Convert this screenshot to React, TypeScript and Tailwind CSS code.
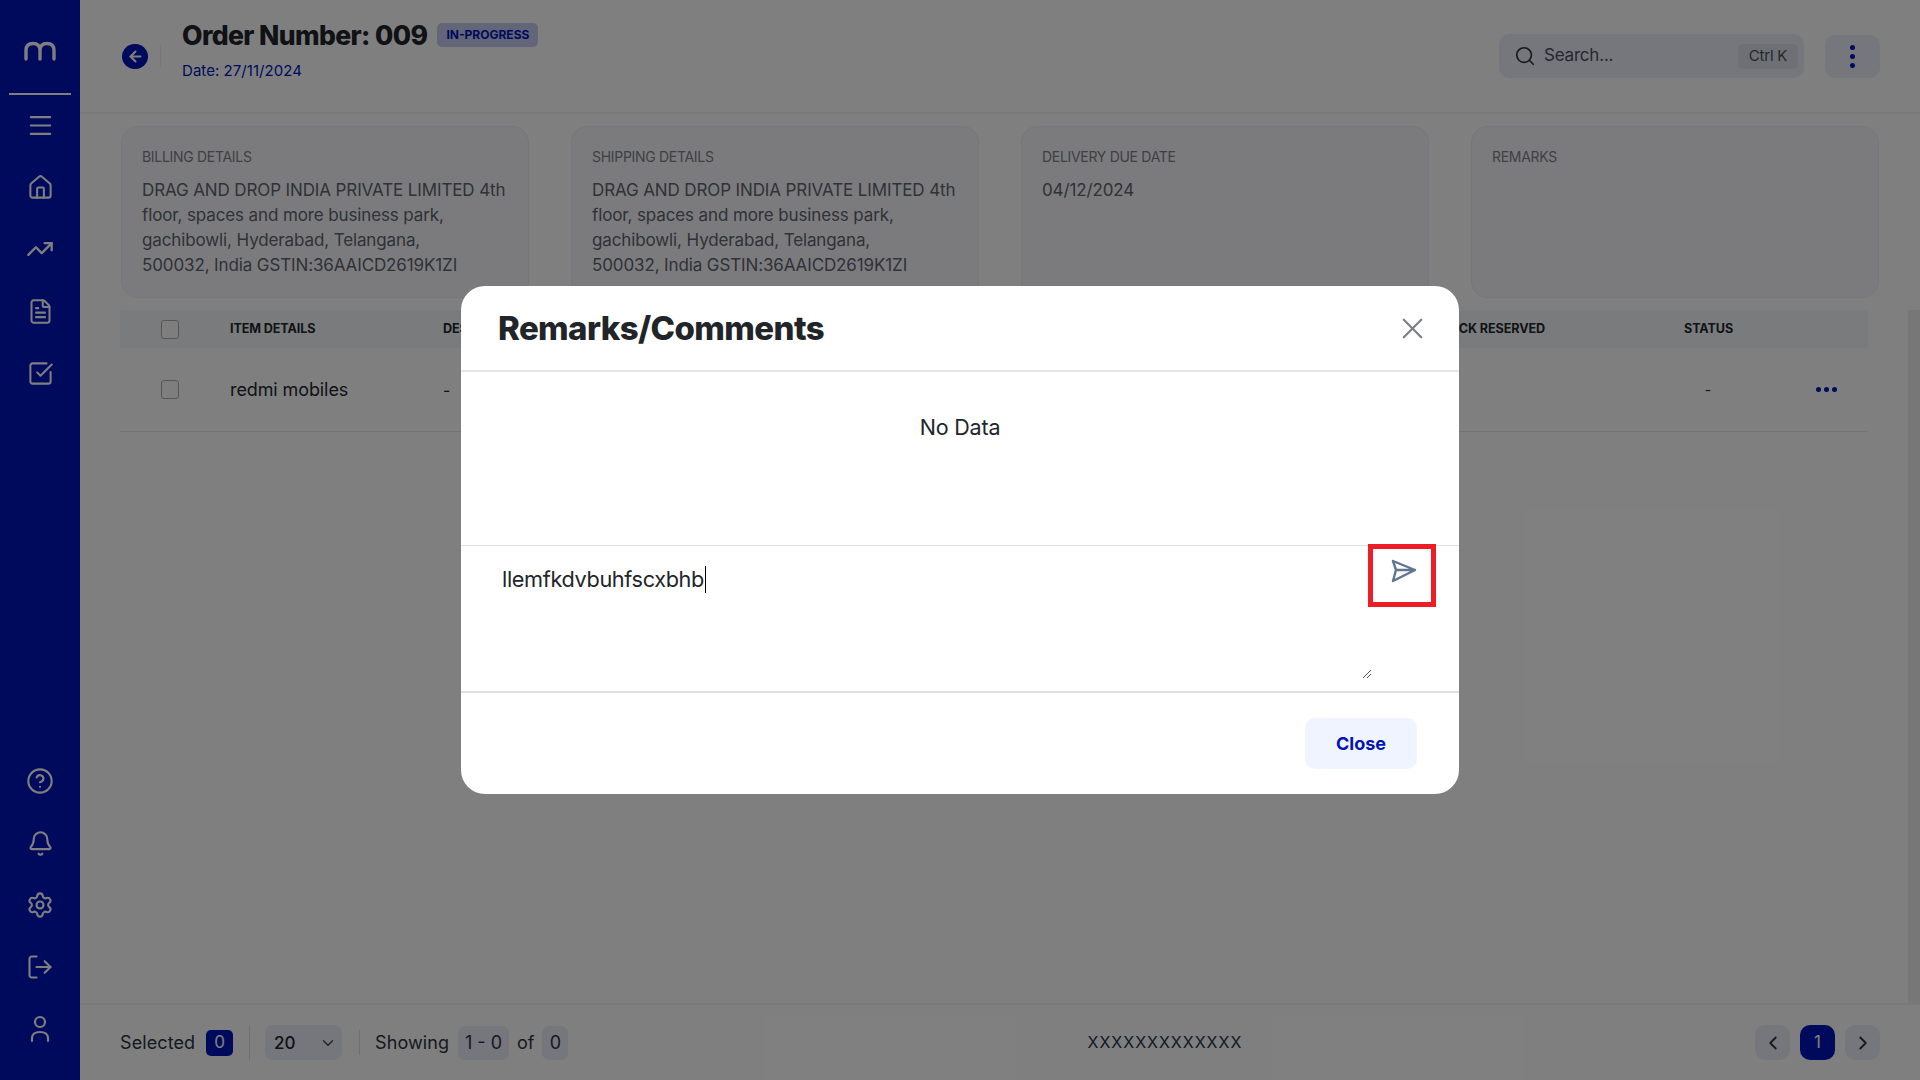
import { ArrowLeft, Bell, ChevronDown, ChevronLeft, ChevronRight, CircleHelp, FileText, Home, LogOut, Menu, Search, Settings, SquareCheckBig, TrendingUp, X } from "lucide-react";

const font = { fontFamily: '"Inter", "Noto Sans", sans-serif' };
const address = [
  "DRAG AND DROP INDIA PRIVATE LIMITED 4th",
  "floor, spaces and more business park,",
  "gachibowli, Hyderabad, Telangana,",
  "500032, India GSTIN:36AAICD2619K1ZI",
];

function NavIcon({ children }: { children: React.ReactNode }) {
  return <div className="flex h-[62px] items-center justify-center text-white">{children}</div>;
}

function Card({ label, lines }: { label: string; lines?: string[] }) {
  return (
    <div className="h-[172px] rounded-[16px] border border-[#eceef6] bg-[#f6f7fc] px-[20px] pt-[20px]">
      <div className="text-[14px] leading-[20px] tracking-[-0.3px] text-[#7d8088]">{label}</div>
      {lines && (
        <div className="mt-[11px] whitespace-nowrap text-[17px] leading-[25px] tracking-[-0.12px] text-[#5f646d]">
          {lines.map((l) => (
            <div key={l}>{l}</div>
          ))}
        </div>
      )}
    </div>
  );
}

function Check() {
  return <div className="h-[19px] w-[18px] rounded-[3px] border border-[#a8abb0] bg-[#fdfdfd]" />;
}

export default function App() {
  return (
    <div className="relative flex h-screen w-screen overflow-hidden bg-white" style={font}>
      <aside className="flex w-[80px] shrink-0 flex-col bg-[#0014b8]">
        <div className="flex h-[93px] items-center justify-center pt-[9px]">
          <svg width="32" height="20" viewBox="0 0 32 20" fill="none" stroke="white" strokeWidth="3.4" strokeLinecap="round">
            <path d="M2 18V9.5C2 5 4.5 2.5 9 2.5C13.5 2.5 16 5 16 9.5V18M16 9.5C16 5 18.5 2.5 23 2.5C27.5 2.5 30 5 30 9.5V18" />
          </svg>
        </div>
        <div className="mx-[9px] h-[2px] bg-white" />
        <div className="-mt-[1px]">
          <NavIcon><Menu size={29} strokeWidth={1.8} /></NavIcon>
          <NavIcon><Home size={27} strokeWidth={1.8} /></NavIcon>
          <NavIcon><TrendingUp size={28} strokeWidth={2} /></NavIcon>
          <NavIcon><FileText size={27} strokeWidth={1.8} /></NavIcon>
          <NavIcon><SquareCheckBig size={27} strokeWidth={1.8} /></NavIcon>
        </div>
        <div className="mt-auto pb-[20px]">
          <NavIcon><CircleHelp size={28} strokeWidth={1.8} /></NavIcon>
          <NavIcon><Bell size={27} strokeWidth={1.8} /></NavIcon>
          <NavIcon><Settings size={28} strokeWidth={1.8} /></NavIcon>
          <NavIcon><LogOut size={28} strokeWidth={1.8} /></NavIcon>
          <NavIcon>
            <svg width="26" height="28" viewBox="0 0 26 28" fill="none" stroke="white" strokeWidth="2.2" strokeLinecap="round">
              <circle cx="13" cy="7" r="5" />
              <path d="M5 26V23C5 19.5 8 17 13 17C18 17 21 19.5 21 23V26" />
            </svg>
          </NavIcon>
        </div>
      </aside>

      <main className="flex min-w-0 flex-1 flex-col">
        <header className="flex h-[114px] shrink-0 items-center border-b-2 border-[#f2f3f5] pl-[42px] pr-[40px]">
          <div className="flex h-[25px] w-[26px] items-center justify-center rounded-full bg-[#0014b8] text-white">
            <ArrowLeft size={17} strokeWidth={3} />
          </div>
          <div className="ml-[12px] h-[22px] w-px bg-[#eceef0]" />
          <div className="ml-[21px] -mt-[13px]">
            <div className="flex items-center">
              <span className="text-[26.5px] font-extrabold leading-[34px] tracking-[-0.6px] text-[#20242c]">Order Number: 009</span>
              <span className="ml-[10px] flex h-[24px] w-[101px] items-center justify-center rounded-[5px] bg-[#c6cbf0] text-[12px] font-bold text-[#0014b8]">IN-PROGRESS</span>
            </div>
            <div className="mt-[9px] text-[15px] leading-[20px] tracking-[0.05px] text-[#0014b8]">Date: 27/11/2024</div>
          </div>
          <div className="ml-auto flex h-[44px] w-[305px] items-center rounded-[10px] bg-[#eaeefb] pl-[15px] pr-[6px]">
            <Search size={22} strokeWidth={1.8} className="text-[#2c3038]" />
            <span className="ml-[8px] text-[17px] tracking-[-0.2px] text-[#4b5058]">Search...</span>
            <span className="ml-auto flex h-[25px] w-[60px] items-center justify-center rounded-[5px] bg-[#dde1ec] text-[15px] tracking-[-0.2px] text-[#4b5058]">Ctrl K</span>
          </div>
          <div className="ml-[21px] flex h-[43px] w-[55px] flex-col items-center justify-center gap-[4px] rounded-[10px] bg-[#eaeefb]">
            <span className="h-[5px] w-[5px] rounded-full bg-[#0014b8]" />
            <span className="h-[5px] w-[5px] rounded-full bg-[#0014b8]" />
            <span className="h-[5px] w-[5px] rounded-full bg-[#0014b8]" />
          </div>
        </header>

        <section className="min-h-0 flex-1 pl-[40px] pr-[40px] pt-[12px]">
          <div className="ml-[1px] mr-px grid grid-cols-4 gap-[42px]">
            <Card label="BILLING DETAILS" lines={address} />
            <Card label="SHIPPING DETAILS" lines={address} />
            <Card label="DELIVERY DUE DATE" lines={["04/12/2024"]} />
            <Card label="REMARKS" />
          </div>
          <div className="mt-[12px] mr-[12px]">
            <div className="flex h-[38px] items-center rounded-[3px] bg-[#f4f6f8] text-[12.6px] font-bold tracking-[-0.1px] text-[#24272e]">
              <div className="flex w-[110px] justify-center pr-[11px]"><Check /></div>
              <div className="w-[213px]">ITEM DETAILS</div>
              <div>DESCRIPTION</div>
              <div className="ml-auto mr-[139px]">STOCK RESERVED</div>
              <div className="w-[184px]">STATUS</div>
            </div>
            <div className="flex h-[84px] items-center border-b border-[#e6e8ec]">
              <div className="flex w-[110px] justify-center pr-[11px]"><Check /></div>
              <div className="w-[213px] text-[18px] tracking-[-0.1px] text-[#24272e]">redmi mobiles</div>
              <div className="text-[16px] text-[#24272e]">-</div>
              <div className="ml-auto flex w-[184px] items-center">
                <div className="w-[48px] text-center text-[14px] text-[#24272e]">-</div>
                <div className="ml-[84px] flex gap-[3px]">
                  <span className="h-[5px] w-[5px] rounded-full bg-[#0014b8]" />
                  <span className="h-[5px] w-[5px] rounded-full bg-[#0014b8]" />
                  <span className="h-[5px] w-[5px] rounded-full bg-[#0014b8]" />
                </div>
              </div>
            </div>
          </div>
        </section>

        <footer className="flex h-[77px] shrink-0 items-center border-t-2 border-[#f2f3f5] pl-[40px] pr-[40px] text-[18px] text-[#2b3240]">
          <span className="w-[77px] whitespace-nowrap tracking-[0.1px]">Selected</span>
          <span className="ml-[9px] flex h-[26px] w-[27px] items-center justify-center rounded-[5px] bg-[#0014b8] text-[17px] text-white">0</span>
          <span className="ml-[16px] h-[35px] w-px bg-[#dfe1e6]" />
          <div className="ml-[15px] flex h-[35px] w-[77px] items-center justify-between rounded-[8px] bg-[#eaeefb] pl-[9px] pr-[5px]">
            <span className="pt-[2px] text-[17px] font-medium text-[#20242c]">20</span>
            <ChevronDown size={18} strokeWidth={1.6} className="text-[#3a3f48]" />
          </div>
          <span className="ml-[17px] h-[25px] w-px bg-[#dfe1e6]" />
          <span className="ml-[15px] w-[76px] whitespace-nowrap tracking-[0.1px]">Showing</span>
          <span className="ml-[7px] flex h-[34px] w-[51px] items-center justify-center rounded-[7px] bg-[#eaeefb]">1 - 0</span>
          <span className="ml-[8px]">of</span>
          <span className="ml-[8px] flex h-[34px] w-[26px] items-center justify-center rounded-[7px] bg-[#eaeefb]">0</span>
          <span className="-mt-[1px] ml-[519px] text-[16px] tracking-[1px] text-[#23344d]">XXXXXXXXXXXXX</span>
          <div className="ml-auto flex items-center gap-[10px]">
            <div className="flex h-[35px] w-[35px] items-center justify-center rounded-[10px] bg-[#eaeefb]"><ChevronLeft size={22} strokeWidth={2} /></div>
            <div className="flex h-[35px] w-[35px] items-center justify-center rounded-[10px] bg-[#0014b8] text-[17px] text-white">1</div>
            <div className="flex h-[35px] w-[35px] items-center justify-center rounded-[10px] bg-[#eaeefb]"><ChevronRight size={22} strokeWidth={2} /></div>
          </div>
        </footer>
      </main>

      <div className="absolute right-0 top-[310px] h-[693px] w-[12px] bg-[#eeeeee]" />

      <div className="absolute inset-0 flex items-center justify-center bg-black/50">
        <div className="relative flex h-[508px] w-[998px] flex-col overflow-hidden rounded-[24px] bg-white">
          <div className="flex h-[86px] shrink-0 items-center justify-between border-b-2 border-[#e4e6ea] pl-[37px] pr-[29px]">
            <span className="pt-[2px] text-[33px] font-extrabold tracking-[-0.6px] text-[#212529]">Remarks/Comments</span>
            <X size={35} strokeWidth={1.5} className="text-[#7c7f83]" />
          </div>
          <div className="h-[173px] shrink-0 pt-[40px] text-center text-[21.5px] leading-[30px] tracking-[-0.2px] text-[#212529]">No Data</div>
          <div className="relative h-[148px] shrink-0 border-t border-b-2 border-[#dee2e6] pl-[41px] pt-[18px]">
            <span className="inline-flex items-center text-[21.7px] leading-[30px] tracking-[-0.35px] text-[#212529]">
              llemfkdvbuhfscxbhb<span className="ml-px inline-block h-[27px] w-px bg-black" />
            </span>
            <svg className="absolute bottom-[12px] left-[901px]" width="10" height="10" viewBox="0 0 10 10" stroke="#555" strokeWidth="1" fill="none">
              <path d="M1 9L9 1M5 9L9 5" />
            </svg>
          </div>
          <div className="flex flex-1 items-center justify-end pr-[42px]">
            <div className="flex h-[51px] w-[112px] items-center justify-center rounded-[10px] bg-[#f0f4ff] text-[18px] font-bold text-[#0014b8]">Close</div>
          </div>
          <div className="absolute left-[907px] top-[258px] flex h-[63px] w-[68px] items-start justify-center border-[5px] border-[#ee1c25] pl-[4px] pt-[10px]">
            <svg width="26" height="24" viewBox="0 0 26 24" fill="none" stroke="#5f7594" strokeWidth="2.4" strokeLinejoin="round" strokeLinecap="round">
              <path d="M2 2L24 11L2 22L5 11L2 2ZM5 11H24" />
            </svg>
          </div>
        </div>
      </div>
    </div>
  );
}
